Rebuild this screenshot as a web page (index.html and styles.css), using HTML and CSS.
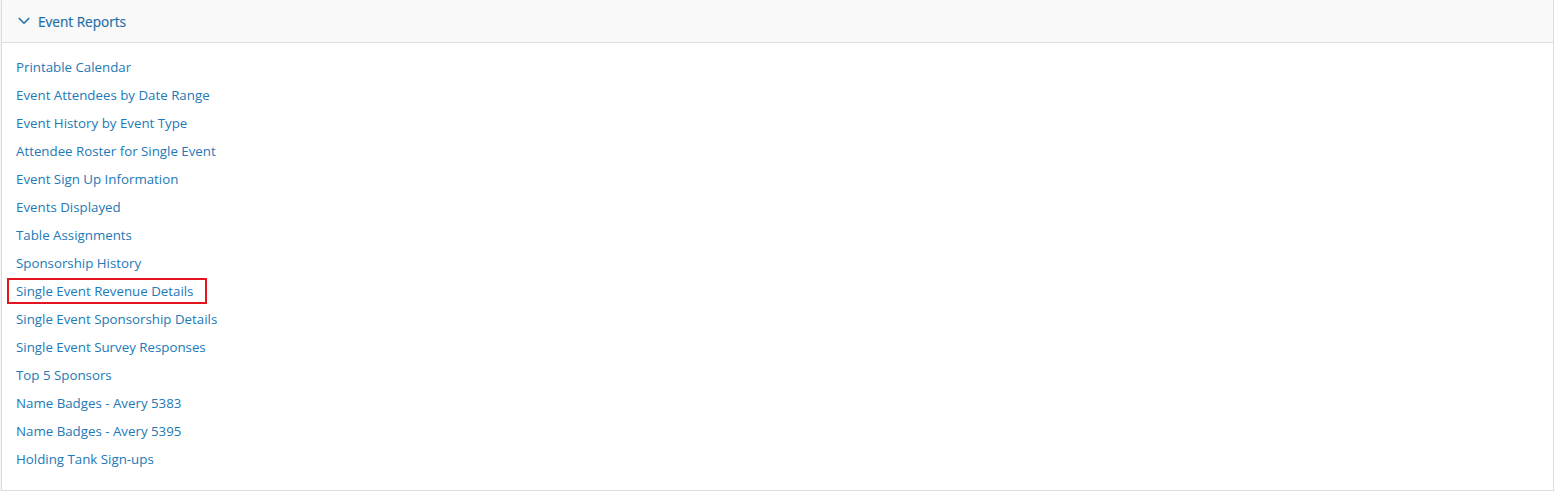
FILE: index.html
```html
<!DOCTYPE html>
<html>
<head>
<meta charset="utf-8">
<link rel="stylesheet" href="styles.css">
</head>
<body>
<div class="panel">
  <div class="panel-header">
    <svg class="chevron" width="12" height="8" viewBox="0 0 12 8"><path d="M0.8 1 L6 6.2 L11.2 1" fill="none" stroke="currentColor" stroke-width="1.6"/></svg>
    <span class="title">Event Reports</span>
  </div>
  <ul class="links">
    <li><a>Printable Calendar</a></li>
    <li><a>Event Attendees by Date Range</a></li>
    <li><a>Event History by Event Type</a></li>
    <li><a>Attendee Roster for Single Event</a></li>
    <li><a>Event Sign Up Information</a></li>
    <li><a>Events Displayed</a></li>
    <li><a>Table Assignments</a></li>
    <li><a>Sponsorship History</a></li>
    <li><a class="highlight">Single Event Revenue Details</a></li>
    <li><a>Single Event Sponsorship Details</a></li>
    <li><a>Single Event Survey Responses</a></li>
    <li><a>Top 5 Sponsors</a></li>
    <li><a>Name Badges - Avery 5383</a></li>
    <li><a>Name Badges - Avery 5395</a></li>
    <li><a>Holding Tank Sign-ups</a></li>
  </ul>
</div>
</body>
</html>
```
FILE: styles.css
```css
html, body {
  margin: 0;
  padding: 0;
  background: #fff;
}
body {
  font-family: "Open Sans", "Noto Sans", sans-serif;
  font-size: 13.3px;
}
.panel {
  margin: -1px 0 0 1px;
  border: 1px solid #dcdcdc;
  box-shadow: 0 1px 2px rgba(0,0,0,0.12);
  background: #fff;
  height: 492px;
  box-sizing: border-box;
}
.panel-header {
  height: 43px;
  background: #f9f9f9;
  border-bottom: 1px solid #dfdfdf;
  display: flex;
  align-items: center;
  padding-left: 16px;
  color: #1c6ea6;
  box-sizing: border-box;
}
.chevron {
  margin-right: 8px;
  color: #1c6ea6;
}
.title {
  font-size: 13.6px;
  font-weight: 500;
  -webkit-text-stroke: 0.2px #1c6ea6;
}
.links {
  list-style: none;
  margin: 0;
  padding: 10px 0 0 14px;
}
.links li {
  height: 28px;
  display: flex;
  align-items: center;
}
.links a {
  color: #2279b6;
  cursor: pointer;
}
.links a.highlight {
  border: 2px solid #e3151f;
  padding: 2px 12px 2px 7px;
  margin-left: -9px;
}
```
